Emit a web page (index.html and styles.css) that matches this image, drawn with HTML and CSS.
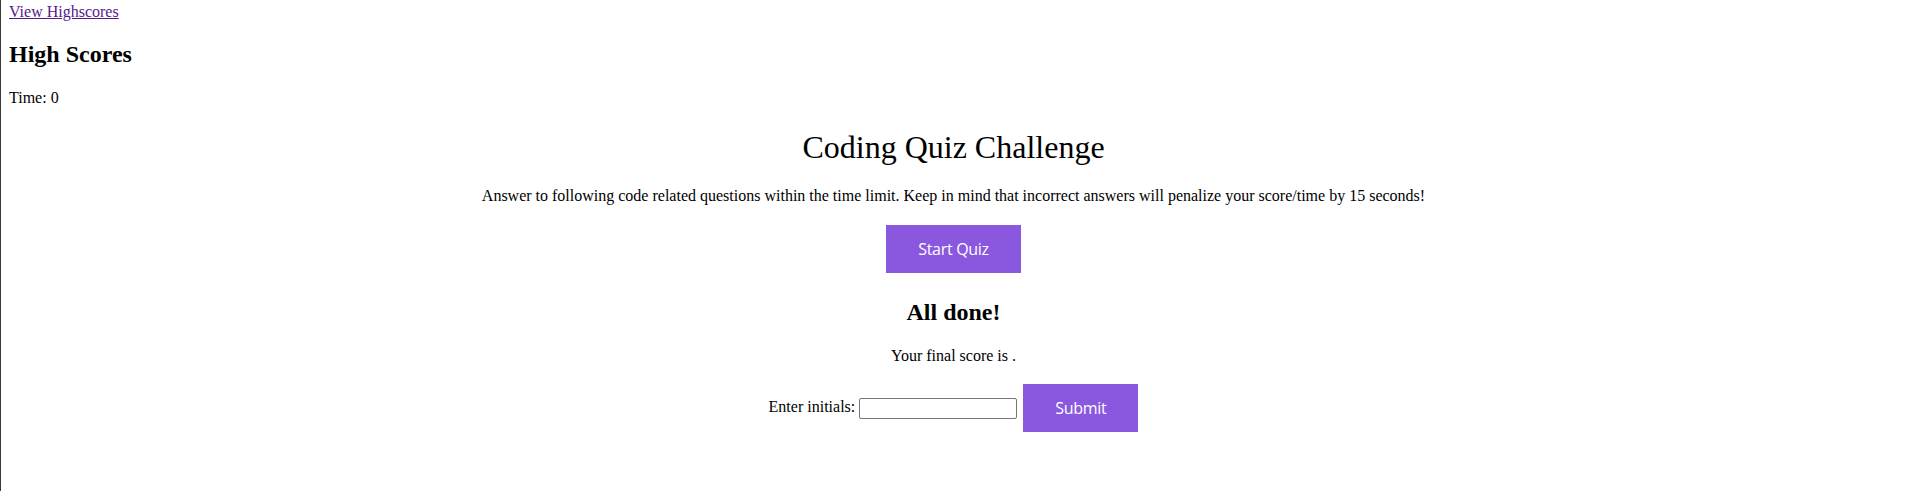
FILE: index.html
```html
<!DOCTYPE html>
<html lang="en">
<head>
<meta charset="utf-8">
<title>Coding Quiz Challenge</title>
<link rel="stylesheet" href="styles.css">
</head>
<body>
<header class="top">
  <a class="highscores-link" href="#">View Highscores</a>
  <h2 class="scores-title">High Scores</h2>
  <p class="timer">Time: 0</p>
</header>
<main class="quiz">
  <h1 class="quiz-title">Coding Quiz Challenge</h1>
  <p class="intro">Answer to following code related questions within the time limit. Keep in mind that incorrect answers will penalize your score/time by 15 seconds!</p>
  <button class="btn btn-start" type="button">Start Quiz</button>
  <h2 class="done-title">All done!</h2>
  <p class="final">Your final score is .</p>
  <form class="initials-form">
    <label class="initials-label">Enter initials: <input class="initials-input" type="text"></label>
    <button class="btn btn-submit" type="button">Submit</button>
  </form>
</main>
</body>
</html>
```

FILE: styles.css
```css
html {
  border-left: 1px solid #3a3a3a;
  background: #ffffff;
  height: 100%;
  box-sizing: border-box;
}
body {
  margin: 3px 8px 8px 8px;
  font-family: "Liberation Serif", "Times New Roman", serif;
  font-size: 16px;
  color: #000;
}
.top {
  display: block;
}
.highscores-link {
  color: #551a8b;
}
.scores-title {
  font-size: 24px;
  margin: 20px 0 0;
}
.timer {
  margin: 21px 0 0;
}
.quiz {
  text-align: center;
}
.quiz-title {
  font-size: 32px;
  font-weight: normal;
  margin: 22px 0 0;
}
.intro {
  margin: 21px 0 0;
}
.btn {
  background: #8a58de;
  color: #ffffff;
  border: none;
  font-family: "Open Sans", "Noto Sans", sans-serif;
  font-size: 16px;
  letter-spacing: -0.3px;
  height: 48px;
  padding: 0 32px;
  cursor: pointer;
}
.btn-start {
  display: block;
  margin: 20px auto 0;
}
.done-title {
  font-size: 24px;
  margin: 26px 0 0;
}
.final {
  margin: 21px 0 0;
}
.initials-form {
  display: flex;
  justify-content: center;
  align-items: center;
  gap: 6px;
  margin-top: 19px;
}
.initials-label {
  font-size: 16px;
}
.initials-input {
  width: 158px;
  height: 21px;
  box-sizing: border-box;
  border: 1px solid #767676;
  border-radius: 2px;
  padding: 1px 2px;
  font-size: 13px;
  vertical-align: middle;
}
```
